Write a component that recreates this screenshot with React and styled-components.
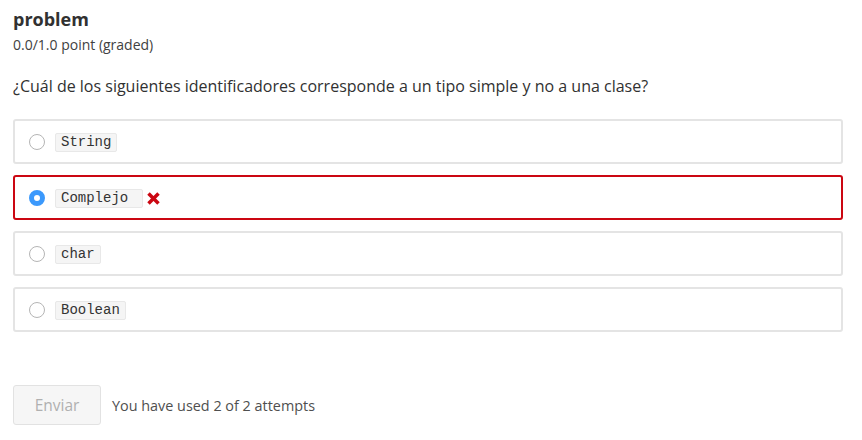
import styled, { createGlobalStyle } from 'styled-components';

const GlobalStyle = createGlobalStyle`
  body {
    margin: 0;
    background: #fff;
    font-family: "Open Sans", "Liberation Sans", sans-serif;
    color: #313131;
  }
`;

const options = [
    { id: 'string', label: 'String' },
    { id: 'complejo', label: 'Complejo\u00a0', checked: true, wrong: true },
    { id: 'char', label: 'char' },
    { id: 'boolean', label: 'Boolean' },
];

export default function App() {
    return (
        <Problem>
            <GlobalStyle />
            <Title>problem</Title>
            <Points>0.0/1.0 point (graded)</Points>
            <Question>¿Cuál de los siguientes identificadores corresponde a un tipo simple y no a una clase?</Question>
            <Choices>
                {options.map((o) => (
                    <Choice key={o.id} $wrong={o.wrong}>
                        <Radio $checked={o.checked} />
                        <Code>{o.label}</Code>
                        {o.wrong && (
                            <svg width="15" height="15" viewBox="0 0 15 15">
                                <path d="M2.5 2.5 L12.5 12.5 M12.5 2.5 L2.5 12.5" stroke="#cb0712" strokeWidth="3.5" strokeLinecap="butt" />
                            </svg>
                        )}
                    </Choice>
                ))}
            </Choices>
            <Actions>
                <SubmitButton disabled>Enviar</SubmitButton>
                <Attempts>You have used 2 of 2 attempts</Attempts>
            </Actions>
        </Problem>
    );
}

const Problem = styled.div`
    padding: 6px 19px 0 13px;
`;

const Title = styled.h3`
    margin: 0;
    font-size: 18px;
    font-weight: 700;
    line-height: 26px;
    color: #313131;
`;

const Points = styled.div`
    font-size: 14px;
    line-height: 20px;
    color: #414141;
    margin-top: 3px;
`;

const Question = styled.p`
    margin: 21px 0 0;
    font-size: 16px;
    line-height: 20px;
    color: #313131;
`;

const Choices = styled.div`
    display: flex;
    flex-direction: column;
    gap: 11px;
    margin-top: 23px;
`;

const Choice = styled.label`
    display: flex;
    align-items: center;
    height: 45px;
    box-sizing: border-box;
    padding: 0 0 0 14px;
    border: 2px solid ${(p) => (p.$wrong ? '#cb0712' : '#e4e4e4')};
    border-radius: 3px;

    svg {
        margin-left: 3px;
        margin-top: 1px;
    }
`;

const Radio = styled.span`
    width: 16px;
    height: 16px;
    box-sizing: border-box;
    border-radius: 50%;
    margin-right: 10px;
    margin-top: 1px;
    border: ${(p) => (p.$checked ? '5px solid #3b99fc' : '1px solid #b5b5b5')};
    background: #fff;
`;

const Code = styled.code`
    font-family: "Liberation Mono", monospace;
    font-size: 14px;
    line-height: 17px;
    color: #333;
    background: #f5f5f5;
    border: 1px solid #e8e8e8;
    border-radius: 2px;
    padding: 0 5px;
    margin-top: 2px;
    white-space: pre;
`;

const Actions = styled.div`
    display: flex;
    align-items: center;
    gap: 11px;
    margin-top: 53px;
`;

const SubmitButton = styled.button`
    width: 88px;
    height: 40px;
    font-family: "Open Sans", "Liberation Sans", sans-serif;
    font-size: 15.5px;
    color: #b0b0b0;
    background: #f6f6f6;
    border: 1px solid #e2e2e2;
    border-radius: 3px;
`;

const Attempts = styled.span`
    font-size: 14.4px;
    color: #4f4f4f;
`;
